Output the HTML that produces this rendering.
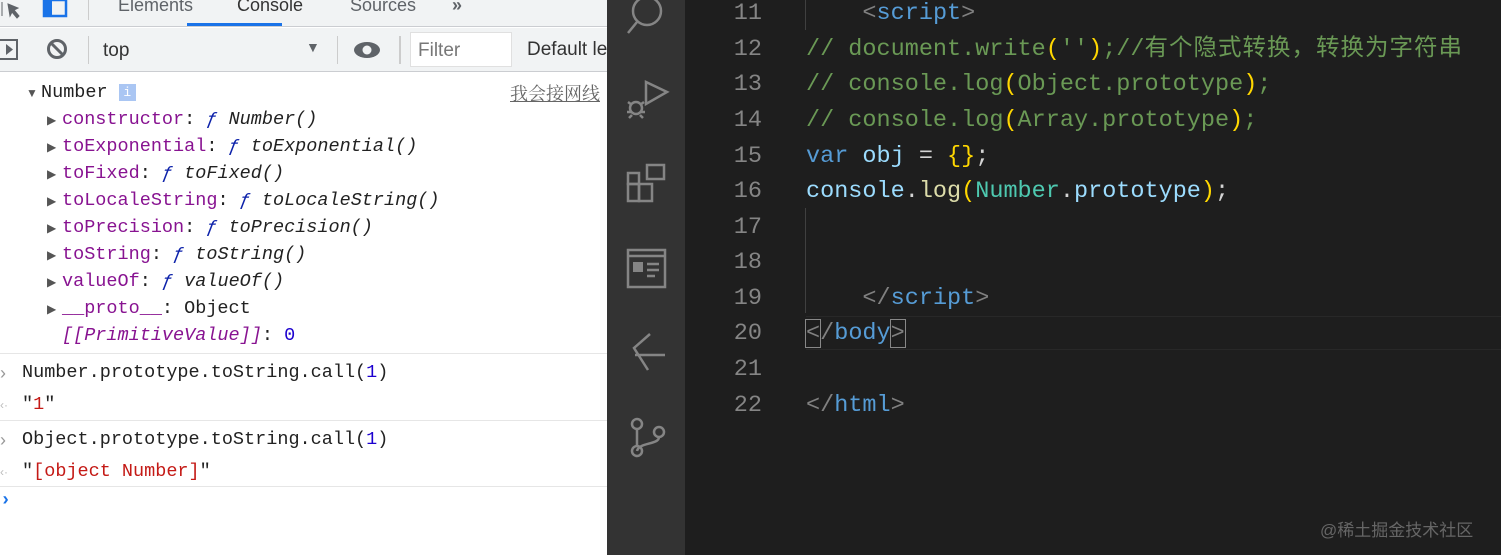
<!DOCTYPE html>
<html><head><meta charset="utf-8"><style>
*{margin:0;padding:0;box-sizing:border-box}
body{width:1501px;height:555px;overflow:hidden;position:relative;background:#fff;font-family:"Liberation Sans",sans-serif}
.dt{position:absolute;left:0;top:0;width:607px;height:555px;background:#fff;overflow:hidden}
.tabs{position:absolute;left:0;top:0;width:607px;height:27px;background:#f1f3f4;border-bottom:1px solid #cbcdd1}
.tabs span{position:absolute;top:-5px;font-size:18px;color:#5f6368}
.tb{position:absolute;left:0;top:28px;width:607px;height:44px;background:#f1f3f4;border-bottom:1px solid #cbcdd1}
.row{position:absolute;white-space:pre;font-size:18.5px;line-height:22px;font-family:"Liberation Mono",monospace;color:#222}
.ar{position:absolute;font-size:12px;color:#555;line-height:22px}
.k{color:#881391}.f{color:#0d22aa;font-style:italic}.i{font-style:italic}
.sep{position:absolute;left:0;width:607px;height:1px;background:#e6e6e6}
.act{position:absolute;left:607px;top:0;width:78px;height:555px;background:#333}
.ed{position:absolute;left:685px;top:0;width:816px;height:555px;background:#1e1e1e}
.ln{position:absolute;left:700px;width:62px;text-align:right;color:#858585;font:23.5px/28px "Liberation Mono",monospace}
.cd{position:absolute;left:806px;white-space:pre;font:23.5px/28px "Liberation Mono","Noto Sans CJK SC",monospace;color:#d4d4d4}
.c{color:#6a9955}.y{color:#ffd700}.b{color:#569cd6}.lb{color:#9cdcfe}.g{color:#808080}.t{color:#4ec9b0}.fn{color:#dcdcaa}
.cj{letter-spacing:1px}
</style></head><body>
<div class="dt">
 <div class="tabs">
  <svg style="position:absolute;left:0;top:0" width="80" height="22"><path d="M2 2v14M8 4l10 4-4 2 5 6-2 2-5-6-2 4z" fill="#5f6368" stroke="#5f6368"/><rect x="44" y="0" width="22" height="16" fill="none" stroke="#1a73e8" stroke-width="2.5"/><rect x="44" y="0" width="8" height="16" fill="#1a73e8"/></svg>
  <div style="position:absolute;left:88px;top:0;width:1px;height:20px;background:#ccc"></div>
  <span style="left:118px">Elements</span>
  <span style="left:237px;color:#333">Console</span>
  <div style="position:absolute;left:187px;top:23px;width:95px;height:3px;background:#1a73e8"></div>
  <span style="left:350px">Sources</span>
  <span style="left:452px;font-weight:bold">»</span>
 </div>
 <div class="tb">
  <svg style="position:absolute;left:0;top:10px" width="90" height="26"><rect x="-2" y="2" width="19" height="19" fill="none" stroke="#5f6368" stroke-width="2"/><path d="M6 6l7 5.5-7 5.5z" fill="#5f6368"/><circle cx="57" cy="11" r="8.5" fill="none" stroke="#5f6368" stroke-width="3"/><path d="M51 5l12 12" stroke="#5f6368" stroke-width="3"/></svg>
  <div style="position:absolute;left:88px;top:8px;width:1px;height:28px;background:#ccc"></div>
  <span style="position:absolute;left:103px;top:12px;font-size:19px;color:#333">top</span>
  <span style="position:absolute;left:306px;top:11px;font-size:14px;color:#5f6368">▼</span>
  <div style="position:absolute;left:337px;top:8px;width:1px;height:28px;background:#ccc"></div>
  <svg style="position:absolute;left:352px;top:12px" width="30" height="20"><ellipse cx="15" cy="10" rx="13" ry="8" fill="#5f6368"/><circle cx="15" cy="10" r="4.5" fill="#f1f3f4"/></svg>
  <div style="position:absolute;left:399px;top:8px;width:2px;height:28px;background:#ccc"></div>
  <div style="position:absolute;left:410px;top:4px;width:102px;height:35px;background:#fff;border:1px solid #e0e0e0"></div>
  <span style="position:absolute;left:418px;top:12px;font-size:19px;color:#777">Filter</span>
  <span style="position:absolute;left:527px;top:11px;font-size:19px;color:#333;white-space:nowrap">Default levels</span>
 </div>
 <div class="ar" style="left:26px;top:82px">▼</div>
 <div class="row" style="left:41px;top:82px">Number <span style="display:inline-block;width:17px;height:17px;background:#aac6f3;color:#fff;font-size:13px;text-align:center;line-height:17px;vertical-align:1px">i</span></div>
 <div style="position:absolute;left:510px;top:80px;font:18px 'Liberation Serif','Noto Serif CJK SC',serif;color:#666;text-decoration:underline;white-space:nowrap">我会接网线</div>
 <div class="ar" style="left:47px;top:109px">▶</div><div class="row" style="left:62px;top:109px"><span class="k">constructor</span>: <span class="f">ƒ</span> <span class="i">Number()</span></div>
 <div class="ar" style="left:47px;top:136px">▶</div><div class="row" style="left:62px;top:136px"><span class="k">toExponential</span>: <span class="f">ƒ</span> <span class="i">toExponential()</span></div>
 <div class="ar" style="left:47px;top:163px">▶</div><div class="row" style="left:62px;top:163px"><span class="k">toFixed</span>: <span class="f">ƒ</span> <span class="i">toFixed()</span></div>
 <div class="ar" style="left:47px;top:190px">▶</div><div class="row" style="left:62px;top:190px"><span class="k">toLocaleString</span>: <span class="f">ƒ</span> <span class="i">toLocaleString()</span></div>
 <div class="ar" style="left:47px;top:217px">▶</div><div class="row" style="left:62px;top:217px"><span class="k">toPrecision</span>: <span class="f">ƒ</span> <span class="i">toPrecision()</span></div>
 <div class="ar" style="left:47px;top:244px">▶</div><div class="row" style="left:62px;top:244px"><span class="k">toString</span>: <span class="f">ƒ</span> <span class="i">toString()</span></div>
 <div class="ar" style="left:47px;top:271px">▶</div><div class="row" style="left:62px;top:271px"><span class="k">valueOf</span>: <span class="f">ƒ</span> <span class="i">valueOf()</span></div>
 <div class="ar" style="left:47px;top:298px">▶</div><div class="row" style="left:62px;top:298px"><span class="k">__proto__</span>: Object</div>
 <div class="row" style="left:62px;top:325px"><span class="k i">[[PrimitiveValue]]</span>: <span style="color:#1c00cf">0</span></div>
 <div class="sep" style="top:353px"></div>
 <div class="ar" style="left:0;top:362px;color:#999;font-size:18px">›</div>
 <div class="row" style="left:22px;top:362px">Number.prototype.toString.call(<span style="color:#1c00cf">1</span>)</div>
 <div class="ar" style="left:0;top:394px;color:#bbb">‹·</div>
 <div class="row" style="left:22px;top:394px">"<span style="color:#c41a16">1</span>"</div>
 <div class="sep" style="top:420px"></div>
 <div class="ar" style="left:0;top:429px;color:#999;font-size:18px">›</div>
 <div class="row" style="left:22px;top:429px">Object.prototype.toString.call(<span style="color:#1c00cf">1</span>)</div>
 <div class="ar" style="left:0;top:461px;color:#bbb">‹·</div>
 <div class="row" style="left:22px;top:461px">"<span style="color:#c41a16">[object Number]</span>"</div>
 <div class="sep" style="top:486px"></div>
 <div class="row" style="left:0;top:490px;color:#1a73e8;font-weight:bold">›</div>
</div>
<div class="act">
 <svg width="78" height="555" fill="none" stroke="#858585" stroke-width="2.5">
  <circle cx="40" cy="11" r="14"/><path d="M30 22l-9 11"/>
  <path d="M39 82v22l21-12z"/><circle cx="29" cy="108" r="6"/><path d="M21 102l4 3M37 102l-4 3M20 112h4M34 112h4M22 118l3-3M36 118l-3-3"/>
  <rect x="21" y="173" width="11" height="11"/><rect x="21" y="184" width="11" height="17"/><rect x="32" y="184" width="13" height="17"/><rect x="40" y="165" width="17" height="14"/>
  <rect x="21" y="250" width="37" height="37"/><path d="M21 256h37"/><rect x="26" y="262" width="10" height="10" fill="#858585" stroke="none"/><path d="M40 264h12M40 270h12M40 276h8"/>
  <path d="M43 334l-16 14 14 22M28 355h30"/>
  <circle cx="30" cy="424" r="5"/><circle cx="30" cy="451" r="5"/><circle cx="52" cy="432" r="5"/><path d="M30 429v17M52 437c0 8-20 5-22 14"/>
 </svg>
</div>
<div class="ed"></div>
<div style="position:absolute;left:805px;top:0;width:1px;height:30px;background:#404040"></div>
<div style="position:absolute;left:805px;top:208px;width:1px;height:105px;background:#404040"></div>
<div style="position:absolute;left:806px;top:316px;width:695px;height:34px;border-top:1px solid #282828;border-bottom:1px solid #282828"></div>
<div class="ln" style="top:0">11</div><div class="ln" style="top:36px">12</div><div class="ln" style="top:71px">13</div><div class="ln" style="top:107px">14</div><div class="ln" style="top:143px">15</div><div class="ln" style="top:178px">16</div><div class="ln" style="top:214px">17</div><div class="ln" style="top:249px">18</div><div class="ln" style="top:285px">19</div><div class="ln" style="top:320px">20</div><div class="ln" style="top:356px">21</div><div class="ln" style="top:392px">22</div>
<div class="cd" style="top:0">    <span class="g">&lt;</span><span class="b">script</span><span class="g">&gt;</span></div>
<div class="cd c" style="top:36px">// document.write<span class="y">(</span>''<span class="y">)</span>;//<span class="cj">有个隐式转换，转换为字符串</span></div>
<div class="cd c" style="top:71px">// console.log<span class="y">(</span>Object.prototype<span class="y">)</span>;</div>
<div class="cd c" style="top:107px">// console.log<span class="y">(</span>Array.prototype<span class="y">)</span>;</div>
<div class="cd" style="top:143px"><span class="b">var</span> <span class="lb">obj</span> = <span class="y">{}</span>;</div>
<div class="cd" style="top:178px"><span class="lb">console</span>.<span class="fn">log</span><span class="y">(</span><span class="t">Number</span>.<span class="lb">prototype</span><span class="y">)</span>;</div>
<div class="cd" style="top:285px">    <span class="g">&lt;/</span><span class="b">script</span><span class="g">&gt;</span></div>
<div class="cd" style="top:320px"><span class="g" style="outline:1px solid #888">&lt;</span><span class="g">/</span><span class="b">body</span><span class="g" style="outline:1px solid #888">&gt;</span></div>
<div class="cd" style="top:392px"><span class="g">&lt;/</span><span class="b">html</span><span class="g">&gt;</span></div>
<div style="position:absolute;left:1320px;top:516px;font:17px 'Liberation Sans','Noto Sans CJK SC',sans-serif;color:#666">@稀土掘金技术社区</div>
</body></html>
